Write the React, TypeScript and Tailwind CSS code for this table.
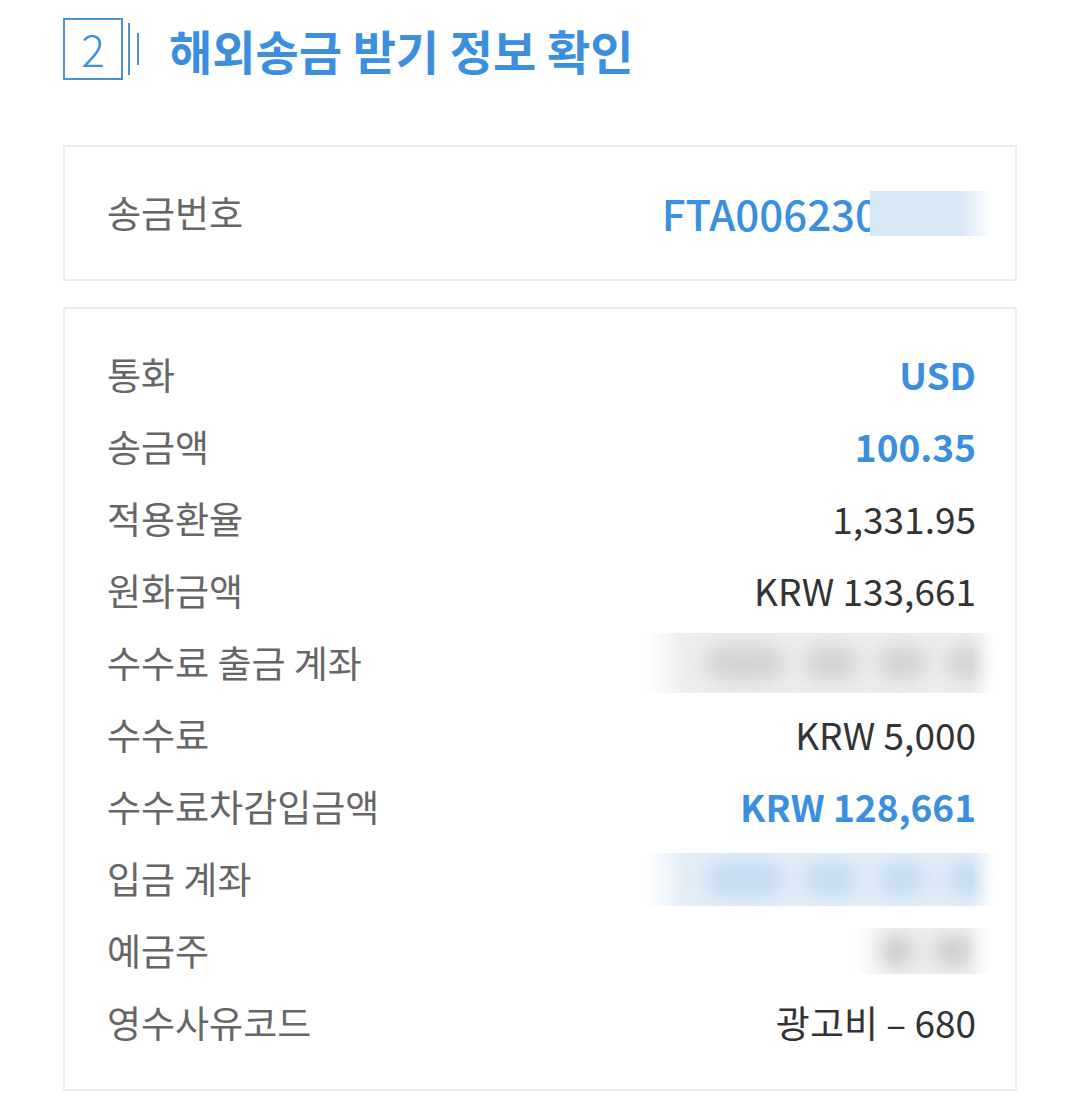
const BLUE = 'text-[#3b8fde]'

type Row = {
  label: string
  value?: string
  tone?: 'blue' | 'dark'
  blur?: 'gray' | 'blue' | 'grayShort'
}

const rows: Row[] = [
  { label: '통화', value: 'USD', tone: 'blue' },
  { label: '송금액', value: '100.35', tone: 'blue' },
  { label: '적용환율', value: '1,331.95', tone: 'dark' },
  { label: '원화금액', value: 'KRW 133,661', tone: 'dark' },
  { label: '수수료 출금 계좌', blur: 'gray' },
  { label: '수수료', value: 'KRW 5,000', tone: 'dark' },
  { label: '수수료차감입금액', value: 'KRW 128,661', tone: 'blue' },
  { label: '입금 계좌', blur: 'blue' },
  { label: '예금주', blur: 'grayShort' },
  { label: '영수사유코드', value: '광고비 – 680', tone: 'dark' },
]

// masked-out account numbers / names
function BlurPatch({ kind }: { kind: 'gray' | 'blue' | 'grayShort' }) {
  const fade =
    '[mask-image:linear-gradient(to_right,transparent,black_40px,black_calc(100%-24px),transparent)]'

  if (kind === 'grayShort') {
    return (
      <div
        className={`-mr-[16px] flex h-[46px] w-[139px] items-center gap-[18px] overflow-hidden bg-[#efefef] pl-[20px] ${fade}`}
      >
        <span className="h-[30px] w-[42px] shrink-0 rounded-full bg-[#cdcdcd] blur-[9px]" />
        <span className="h-[30px] w-[40px] shrink-0 rounded-full bg-[#cdcdcd] blur-[9px]" />
      </div>
    )
  }

  const base = kind === 'gray' ? 'h-[60px] bg-[#eeeeee]' : 'h-[53px] bg-[#e3eef8]'
  const blob = kind === 'gray' ? 'bg-[#d2d2d2]' : 'bg-[#c4dcf1]'
  return (
    <div
      className={`-mr-[19px] flex w-[350px] items-center gap-[18px] overflow-hidden pl-[60px] ${base} ${fade}`}
    >
      <span className={`h-[36px] w-[80px] shrink-0 rounded-full ${blob} blur-[10px]`} />
      <span className={`h-[34px] w-[56px] shrink-0 rounded-full ${blob} blur-[10px]`} />
      <span className={`h-[34px] w-[50px] shrink-0 rounded-full ${blob} blur-[10px]`} />
      <span className={`h-[34px] w-[48px] shrink-0 rounded-full ${blob} blur-[10px]`} />
    </div>
  )
}

export default function App() {
  return (
    <div
      className="min-h-[1113px] w-[1080px] bg-white px-[63px] pt-[18px]"
      style={{ fontFamily: '"Noto Sans CJK KR", "Noto Sans", sans-serif' }}
    >
      {/* step heading */}
      <div className="flex items-center">
        <div className="flex items-start">
          <div className="flex h-[62px] w-[60px] items-center justify-center border-2 border-[#4a92d8] pb-[2px] text-[44px] font-light leading-none text-[#3b8fde]">
            2
          </div>
          <div className="ml-[5px] mt-[5px] h-[52px] w-[2px] bg-[#4a92d8]" />
          <div className="ml-[7px] mt-[15px] h-[32px] w-[2px] bg-[#4a92d8]" />
        </div>
        <h1 className={`ml-[30px] text-[47px] font-bold leading-none ${BLUE}`}>
          해외송금 받기 정보 확인
        </h1>
      </div>

      {/* remittance number */}
      <div className="mt-[65px] flex h-[136px] items-center justify-between border-2 border-[#ececec] pl-[42px] pr-[39px]">
        <span className="text-[37px] text-[#666666]">송금번호</span>
        <span className="-mr-[17px] flex items-center">
          <span className={`text-[42px] font-medium leading-none ${BLUE}`}>FTA006230</span>
          <span className="relative -ml-[9px] h-[45px] w-[123px] bg-[#d6e7f6] [mask-image:linear-gradient(to_right,black,black_72%,transparent)]" />
        </span>
      </div>

      {/* detail rows */}
      <div className="mt-[26px] border-2 border-[#ececec] py-[30px] pl-[42px] pr-[39px]">
        {rows.map((row) => (
          <div key={row.label} className="flex h-[72px] items-center justify-between">
            <span className="text-[37px] text-[#666666]">{row.label}</span>
            {row.blur ? (
              <BlurPatch kind={row.blur} />
            ) : (
              <span
                className={`text-[37px] ${
                  row.tone === 'blue' ? `font-bold ${BLUE}` : 'text-[#333333]'
                }`}
              >
                {row.value}
              </span>
            )}
          </div>
        ))}
      </div>
    </div>
  )
}
